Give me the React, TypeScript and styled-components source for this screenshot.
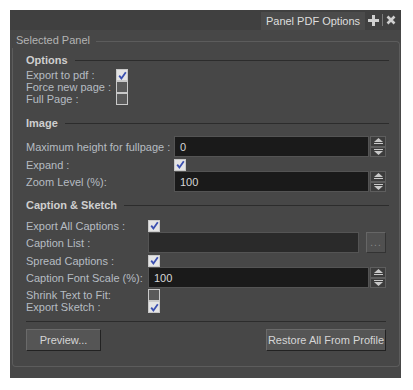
import React from "react";
import styled, { createGlobalStyle } from "styled-components";

const Global = createGlobalStyle`
  html, body { margin: 0; padding: 0; background: #ffffff; }
  body { font-family: "Liberation Sans", Arial, sans-serif; font-size: 11px; }
`;

const Window = styled.div`
  margin: 10px 0 0 10px;
  width: 391px;
  height: 368px;
  background: #474747;
  display: flex;
  flex-direction: column;
  box-sizing: border-box;
`;

const TitleBar = styled.div`
  height: 20px;
  background: #404040;
  display: flex;
  justify-content: flex-end;
  align-items: flex-end;
  padding-right: 5px;
  gap: 3px;
`;

const Tab = styled.div`
  width: 104px;
  height: 18px;
  background: #4b4b4b;
  color: #dedede;
  display: flex;
  align-items: center;
  justify-content: center;
  font-size: 11px;
`;

const TitleIcons = styled.div`
  height: 20px;
  display: flex;
  align-items: center;
  gap: 3px;
`;

const IconSep = styled.div`
  width: 1px;
  height: 12px;
  background: #7a7a7a;
`;

const Body = styled.div`
  flex: 1;
  padding: 1px 1px 11px 2px;
  display: flex;
  flex-direction: column;
`;

const GroupTitleRow = styled.div`
  display: flex;
  align-items: flex-start;
  height: 17px;
`;

const GroupTitle = styled.div`
  color: #b4b4b4;
  padding: 3px 6px 0 4px;
  line-height: 13px;
`;

const GroupTitleLine = styled.div`
  flex: 1;
  margin-top: 10px;
  height: 7px;
  border-top: 1px solid #5c5c5c;
  border-right: 1px solid #5c5c5c;
  border-top-right-radius: 4px;
`;

const GroupFrame = styled.div`
  flex: 1;
  border: 1px solid #5c5c5c;
  border-top: none;
  border-bottom-left-radius: 4px;
  border-bottom-right-radius: 4px;
  padding: 5px 13px 0 13px;
  display: flex;
  flex-direction: column;
`;

const SectionHead = styled.div<{ $gap: number }>`
  display: flex;
  align-items: center;
  height: 14px;
  margin-top: ${(p) => p.$gap}px;
  color: #cfcfcf;
  font-weight: bold;
`;

const HeadLine = styled.div`
  flex: 1;
  height: 1px;
  background: #2c2c2c;
  margin-left: 7px;
  margin-right: -3px;
`;

const Grid = styled.div<{ $label: number; $top: number }>`
  display: grid;
  grid-template-columns: ${(p) => p.$label}px 1fr;
  margin-top: ${(p) => p.$top}px;
  align-items: center;
`;

const Label = styled.div`
  color: #b6bcc2;
  white-space: nowrap;
  line-height: 12px;
`;

const CheckCell = styled.div<{ $h: number }>`
  height: ${(p) => p.$h}px;
  display: flex;
  align-items: center;
`;

const Box = styled.div<{ $on: boolean }>`
  width: 10px;
  height: 10px;
  border: 1px solid #c9c9c9;
  background: ${(p) => (p.$on ? "#e4e4e4" : "#5a5a5a")};
  display: flex;
  align-items: center;
  justify-content: center;
`;

const FieldRow = styled.div`
  display: flex;
  align-items: stretch;
  height: 21px;
  margin: 0 0 1px 0;
`;

const Input = styled.div<{ $dim?: boolean }>`
  flex: 1;
  background: ${(p) => (p.$dim ? "#2a2a2a" : "#1a1a1a")};
  border: 1px solid #545454;
  color: #d6d6d6;
  display: flex;
  align-items: center;
  padding-left: 5px;
`;

const Spin = styled.div`
  width: 16px;
  margin-left: 1px;
  display: flex;
  flex-direction: column;
`;

const SpinBtn = styled.div`
  flex: 1;
  background: #3c3c3c;
  border: 1px solid #5e5e5e;
  display: flex;
  align-items: center;
  justify-content: center;
`;

const DotsBtn = styled.div`
  width: 18px;
  margin-left: 7px;
  background: #505050;
  border: 1px solid #666;
  border-bottom-color: #333;
  border-right-color: #333;
  color: #8a8a8a;
  display: flex;
  align-items: center;
  justify-content: center;
  font-size: 10px;
  letter-spacing: 1px;
`;

const Separator = styled.div`
  height: 1px;
  background: #2c2c2c;
  margin: 8px 0 0 0;
`;

const Buttons = styled.div`
  display: flex;
  justify-content: space-between;
  margin-top: 7px;
`;

const Button = styled.div<{ $w: number }>`
  width: ${(p) => p.$w}px;
  height: 22px;
  box-sizing: border-box;
  background: #555555;
  border: 1px solid #6a6a6a;
  border-right-color: #222;
  border-bottom-color: #222;
  color: #d6d6d6;
  display: flex;
  align-items: center;
  justify-content: center;
  white-space: nowrap;
`;

const Check = ({ on, h = 12 }: { on: boolean; h?: number }) => (
  <CheckCell $h={h}>
    <Box $on={on}>
      {on && (
        <svg width="9" height="9" viewBox="0 0 9 9">
          <path d="M1.2 4.6 L3.4 7.4 L7.8 1.2" stroke="#3a4fb0" strokeWidth="1.8" fill="none" />
        </svg>
      )}
    </Box>
  </CheckCell>
);

const Arrow = ({ up }: { up: boolean }) => (
  <svg width="9" height="6" viewBox="0 0 9 6">
    {up ? (
      <>
        <polygon points="4.5,0 9,4 0,4" fill="#c8c8c8" />
        <rect x="0" y="5" width="9" height="1" fill="#c8c8c8" />
      </>
    ) : (
      <>
        <rect x="0" y="0" width="9" height="1" fill="#c8c8c8" />
        <polygon points="0,2 9,2 4.5,6" fill="#c8c8c8" />
      </>
    )}
  </svg>
);

const SpinField = ({ value }: { value: string }) => (
  <FieldRow>
    <Input>{value}</Input>
    <Spin>
      <SpinBtn>
        <Arrow up />
      </SpinBtn>
      <SpinBtn>
        <Arrow up={false} />
      </SpinBtn>
    </Spin>
  </FieldRow>
);

export default function App() {
  return (
    <>
      <Global />
      <Window>
        <TitleBar>
          <Tab>Panel PDF Options</Tab>
          <TitleIcons>
            <svg width="11" height="11" viewBox="0 0 11 11">
              <rect x="4" y="0" width="3" height="11" fill="#cfcfcf" />
              <rect x="0" y="4" width="11" height="3" fill="#cfcfcf" />
            </svg>
            <IconSep />
            <svg width="10" height="10" viewBox="0 0 10 10">
              <path d="M1.5 1.5 L8.5 8.5 M8.5 1.5 L1.5 8.5" stroke="#cfcfcf" strokeWidth="2.6" />
            </svg>
          </TitleIcons>
        </TitleBar>
        <Body>
          <GroupTitleRow>
            <GroupTitle>Selected Panel</GroupTitle>
            <GroupTitleLine />
          </GroupTitleRow>
          <GroupFrame>
            <SectionHead $gap={0}>
              Options
              <HeadLine />
            </SectionHead>
            <Grid $label={90} $top={2}>
              <Label>Export to pdf :</Label>
              <Check on />
              <Label>Force new page :</Label>
              <Check on={false} />
              <Label>Full Page :</Label>
              <Check on={false} />
            </Grid>

            <SectionHead $gap={11}>
              Image
              <HeadLine />
            </SectionHead>
            <Grid $label={148} $top={6}>
              <Label>Maximum height for fullpage :</Label>
              <SpinField value="0" />
              <Label>Expand :</Label>
              <Check on h={13} />
              <Label>Zoom Level (%):</Label>
              <SpinField value="100" />
            </Grid>

            <SectionHead $gap={5}>
              Caption &amp; Sketch
              <HeadLine />
            </SectionHead>
            <Grid $label={122} $top={7}>
              <Label>Export All Captions :</Label>
              <Check on h={13} />
              <Label>Caption List :</Label>
              <FieldRow>
                <Input $dim />
                <DotsBtn>...</DotsBtn>
              </FieldRow>
              <Label>Spread Captions :</Label>
              <Check on h={13} />
              <Label>Caption Font Scale (%):</Label>
              <SpinField value="100" />
              <Label>Shrink Text to Fit:</Label>
              <Check on={false} />
              <Label>Export Sketch :</Label>
              <Check on />
            </Grid>

            <Separator />
            <Buttons>
              <Button $w={75}>Preview...</Button>
              <Button $w={120}>Restore All From Profile</Button>
            </Buttons>
          </GroupFrame>
        </Body>
      </Window>
    </>
  );
}
